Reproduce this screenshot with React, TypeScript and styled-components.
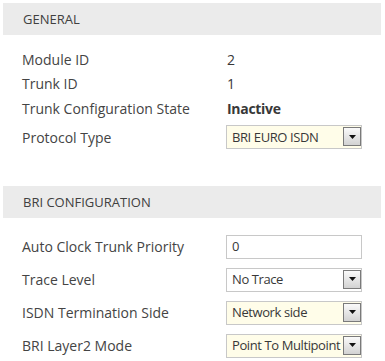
import styled, { createGlobalStyle } from 'styled-components'

const GlobalStyle = createGlobalStyle`
  body {
    margin: 0;
    background: #fff;
    font-family: "Open Sans", "Liberation Sans", sans-serif;
    color: #3a3a3a;
  }
`

const Page = styled.div`
  width: 385px;
  padding: 3px 4px 0 3px;
  box-sizing: border-box;
`

const Section = styled.section`
  & + & {
    margin-top: 32.5px;
  }
`

const SectionHeader = styled.div`
  height: 32px;
  background: #ebebeb;
  display: flex;
  align-items: center;
  padding-left: 20px;
  font-size: 13px;
  color: #404040;
`

const Body = styled.div`
  padding-top: 12px;
`

const Row = styled.div<{ $tall?: boolean }>`
  display: flex;
  align-items: center;
  height: ${({ $tall }) => ($tall ? 33 : 24.5)}px;
  padding-left: 19px;
  font-size: 14px;
`

const Label = styled.div`
  width: 204px;
  color: #444;
`

const Value = styled.div<{ $bold?: boolean }>`
  padding-left: 1px;
  font-weight: ${({ $bold }) => ($bold ? 700 : 400)};
  letter-spacing: ${({ $bold }) => ($bold ? '-0.3px' : '0')};
  color: #383838;
`

const Field = styled.div<{ $yellow?: boolean }>`
  width: 136px;
  height: 24px;
  box-sizing: border-box;
  border: 1px solid #c8c8c8;
  background: ${({ $yellow }) => ($yellow ? '#fffde9' : '#fff')};
  display: flex;
  align-items: center;
  padding: 1px 0 2px 5px;
  font-size: 13px;
  letter-spacing: -0.4px;
  color: #383838;
`

const FieldText = styled.span`
  flex: 1;
  min-width: 0;
  white-space: nowrap;
  overflow: hidden;
`

const DropButton = styled.div`
  flex: none;
  width: 18px;
  height: 100%;
  box-sizing: border-box;
  border: 1px solid #7a7a7a;
  background: linear-gradient(#fafafa, #d2d2d2);
  display: flex;
  align-items: center;
  justify-content: center;
`

const Select = ({ value, yellow }: { value: string; yellow?: boolean }) => (
  <Field $yellow={yellow}>
    <FieldText>{value}</FieldText>
    <DropButton>
      <svg width="7" height="4" viewBox="0 0 7 4">
        <path d="M0 0h7L3.5 4z" fill="#111" />
      </svg>
    </DropButton>
  </Field>
)

export default function App() {
  return (
    <Page>
      <GlobalStyle />
      <Section>
        <SectionHeader>GENERAL</SectionHeader>
        <Body>
          <Row>
            <Label>Module ID</Label>
            <Value>2</Value>
          </Row>
          <Row>
            <Label>Trunk ID</Label>
            <Value>1</Value>
          </Row>
          <Row>
            <Label>Trunk Configuration State</Label>
            <Value $bold>Inactive</Value>
          </Row>
          <Row $tall>
            <Label>Protocol Type</Label>
            <Select value="BRI EURO ISDN" yellow />
          </Row>
        </Body>
      </Section>
      <Section>
        <SectionHeader>BRI CONFIGURATION</SectionHeader>
        <Body>
          <Row $tall>
            <Label>Auto Clock Trunk Priority</Label>
            <Field>
              <FieldText>0</FieldText>
            </Field>
          </Row>
          <Row $tall>
            <Label>Trace Level</Label>
            <Select value="No Trace" />
          </Row>
          <Row $tall>
            <Label>ISDN Termination Side</Label>
            <Select value="Network side" yellow />
          </Row>
          <Row $tall>
            <Label>BRI Layer2 Mode</Label>
            <Select value="Point To Multipoint" yellow />
          </Row>
        </Body>
      </Section>
    </Page>
  )
}
